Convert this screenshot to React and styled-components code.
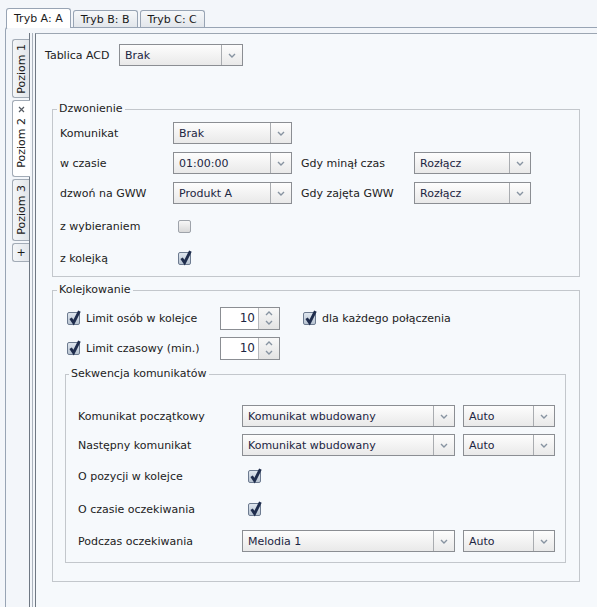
import React from 'react'
import styled, { createGlobalStyle } from 'styled-components'

const GlobalStyle = createGlobalStyle`
  html, body {
    margin: 0;
    padding: 0;
    background: #f3f6fa;
  }
  body {
    font-family: "DejaVu Sans", Verdana, sans-serif;
    font-size: 11px;
    color: #222222;
  }
`

const Window = styled.div`
  width: 597px;
  height: 607px;
  overflow: hidden;
  display: flex;
  flex-direction: column;
`

const TabBar = styled.div`
  display: flex;
  align-items: flex-end;
  gap: 2px;
  height: 27px;
  box-sizing: border-box;
  padding: 8px 0 0 6px;
`

const TopTab = styled.div`
  position: relative;
  z-index: ${p => (p.$active ? 2 : 0)};
  box-sizing: border-box;
  height: ${p => (p.$active ? 20 : 17)}px;
  margin-bottom: ${p => (p.$active ? -1 : 0)}px;
  padding: 0 7px 0 7px;
  display: flex;
  align-items: center;
  border: 1px solid #98a4b4;
  border-bottom: none;
  border-radius: 3px 3px 0 0;
  background: ${p => (p.$active ? '#ffffff' : 'linear-gradient(#f6f8fa, #e2e6eb)')};
  color: #1a1a1a;
  white-space: nowrap;
`

const OuterPanel = styled.div`
  flex: 1;
  display: flex;
  margin-left: 5px;
  border-top: 1px solid #98a4b4;
  border-left: 1px solid #98a4b4;
  border-top-left-radius: 3px;
  min-height: 0;
`

const SideStrip = styled.div`
  width: 23px;
  flex: none;
  box-sizing: border-box;
  padding: 11px 0 0 6px;
  display: flex;
  flex-direction: column;
  gap: 2px;
`

const SideTab = styled.div`
  position: relative;
  z-index: ${p => (p.$active ? 2 : 0)};
  box-sizing: border-box;
  width: ${p => (p.$active ? 18 : 17)}px;
  height: ${p => p.$h}px;
  border: 1px solid #a2abb6;
  border-right: none;
  border-radius: 3px 0 0 3px;
  background: ${p => (p.$active ? '#ffffff' : 'linear-gradient(to right, #f4f6f8, #e1e5ea)')};
  display: flex;
  flex-direction: column;
  align-items: center;
  justify-content: ${p => (p.$active ? 'flex-start' : 'center')};
  padding-top: ${p => (p.$active ? 5 : 0)}px;
  color: #1a1a1a;
`

const SideText = styled.span`
  writing-mode: vertical-rl;
  transform: rotate(180deg);
  white-space: nowrap;
  line-height: 15px;
  margin-top: ${p => p.$mt || 0}px;
`

const Pane = styled.div`
  flex: 1;
  display: flex;
  margin-top: 5px;
  border-left: 1px solid #6f7883;
  padding-left: 2px;
`

const PaneInner = styled.div`
  flex: 1;
  display: flex;
  border-left: 1px solid #aab2bc;
  padding-left: 2px;
`

const Content = styled.div`
  flex: 1;
  border-left: 1px solid #6f7883;
  border-top: 1px solid #9ca6b2;
  background: #f6f9fc;
  padding: 10px 0 0 9px;
`

const Row = styled.div`
  display: flex;
  align-items: center;
  height: ${p => p.$h || 30}px;
  padding-left: ${p => p.$pl || 0}px;
`

const Label = styled.span`
  flex: none;
  box-sizing: border-box;
  width: ${p => p.$w}px;
  padding-left: ${p => p.$pl || 0}px;
  white-space: nowrap;
`

const Group = styled.fieldset`
  box-sizing: border-box;
  width: ${p => p.$w}px;
  min-width: 0;
  margin: ${p => p.$mt}px 0 0 ${p => p.$ml}px;
  padding: ${p => p.$pad};
  border: 1px solid #c3c7cc;
`

const Legend = styled.legend`
  padding: 0 2px;
  margin-left: ${p => p.$ml}px;
  line-height: 14px;
  color: #222222;
`

const SelectBox = styled.div`
  flex: none;
  box-sizing: border-box;
  width: ${p => p.$w}px;
  height: 22px;
  margin-left: ${p => p.$ml || 0}px;
  display: flex;
  border: 1px solid #8b8e93;
  background: linear-gradient(#fdfdfd, #e9e9e9);
  color: #1c2542;
`

const SelectValue = styled.span`
  flex: 1;
  padding-left: 5px;
  display: flex;
  align-items: center;
  white-space: nowrap;
  overflow: hidden;
`

const SelectArrow = styled.span`
  width: 20px;
  flex: none;
  border-left: 1px solid #a9acb0;
  display: flex;
  align-items: center;
  justify-content: center;
`

const SpinBox = styled.div`
  flex: none;
  box-sizing: border-box;
  width: 60px;
  height: 23px;
  display: flex;
  border: 1px solid #8b8e93;
  background: #ffffff;
`

const SpinValue = styled.span`
  flex: 1;
  display: flex;
  align-items: center;
  justify-content: flex-end;
  padding-right: 3px;
  color: #1c2542;
  font-size: 12px;
`

const SpinButtons = styled.span`
  width: 20px;
  flex: none;
  border-left: 1px solid #b6b9bd;
  background: linear-gradient(#f8f8f8, #e3e3e3);
  display: flex;
  flex-direction: column;
  align-items: center;
  justify-content: center;
  gap: 4px;
`

const Box = styled.span`
  position: relative;
  flex: none;
  box-sizing: border-box;
  width: 13px;
  height: 13px;
  margin-left: ${p => p.$ml || 0}px;
  border: 1px solid ${p => (p.$on ? '#6d7b90' : '#9ea3aa')};
  border-radius: 2px;
  background: ${p => (p.$on ? 'linear-gradient(#dfe6ee, #b8c4d2)' : 'linear-gradient(#f7f7f7, #d9d9d9)')};
`

const Tick = styled.svg`
  position: absolute;
  left: -1px;
  top: -5px;
  overflow: visible;
`

const CheckText = styled.span`
  margin-left: 6px;
  white-space: nowrap;
`

const CheckCell = styled.span`
  flex: none;
  width: ${p => p.$w}px;
  display: flex;
  align-items: center;
`

const Chevron = ({ up }) => (
  <svg width="8" height="5" viewBox="0 0 8 5">
    <polyline
      points={up ? '1,4 4,1 7,4' : '1,1 4,4 7,1'}
      fill="none"
      stroke="#8793a1"
      strokeWidth="1.4"
    />
  </svg>
)

const Select = ({ w, ml, children }) => (
  <SelectBox $w={w} $ml={ml}>
    <SelectValue>{children}</SelectValue>
    <SelectArrow>
      <Chevron />
    </SelectArrow>
  </SelectBox>
)

const Spinner = ({ value }) => (
  <SpinBox>
    <SpinValue>{value}</SpinValue>
    <SpinButtons>
      <Chevron up />
      <Chevron />
    </SpinButtons>
  </SpinBox>
)

// bold windows-style tick, its top end pokes out above the box
const Check = ({ on, ml }) => (
  <Box $on={on} $ml={ml}>
    {on && (
      <Tick width="15" height="18" viewBox="0 0 15 18">
        <path d="M3.6 10.2 L6.6 14.6 L12.4 3.2" fill="none" stroke="#1f2d4d" strokeWidth="2.9" strokeLinejoin="miter" />
      </Tick>
    )}
  </Box>
)

const CloseMark = () => (
  <svg width="7" height="7" viewBox="0 0 7 7">
    <path d="M1 1 L6 6 M6 1 L1 6" stroke="#555b63" strokeWidth="1.2" />
  </svg>
)

export default function App() {
  return (
    <>
      <GlobalStyle />
      <Window>
        <TabBar>
          <TopTab $active>Tryb A: A</TopTab>
          <TopTab>Tryb B: B</TopTab>
          <TopTab>Tryb C: C</TopTab>
        </TabBar>
        <OuterPanel>
          <SideStrip>
            <SideTab $h={59}>
              <SideText>Poziom 1</SideText>
            </SideTab>
            <SideTab $h={77} $active>
              <CloseMark />
              <SideText $mt={5}>Poziom 2</SideText>
            </SideTab>
            <SideTab $h={62}>
              <SideText>Poziom 3</SideText>
            </SideTab>
            <SideTab $h={19}>+</SideTab>
          </SideStrip>
          <Pane>
            <PaneInner>
              <Content>
                <Row $h={22}>
                  <Label $w={74}>Tablica ACD</Label>
                  <Select w={124}>Brak</Select>
                </Row>

                <Group $w={528} $mt={36} $ml={7} $pad="2px 7px 4px 7px">
                  <Legend $ml={-3}>Dzwonienie</Legend>
                  <Row>
                    <Label $w={113}>Komunikat</Label>
                    <Select w={119}>Brak</Select>
                  </Row>
                  <Row>
                    <Label $w={113}>w czasie</Label>
                    <Select w={119}>01:00:00</Select>
                    <Label $w={122} $pl={9}>Gdy minął czas</Label>
                    <Select w={117}>Rozłącz</Select>
                  </Row>
                  <Row>
                    <Label $w={113}>dzwoń na GWW</Label>
                    <Select w={119}>Produkt A</Select>
                    <Label $w={122} $pl={9}>Gdy zajęta GWW</Label>
                    <Select w={117}>Rozłącz</Select>
                  </Row>
                  <Row $h={36}>
                    <Label $w={113}>z wybieraniem</Label>
                    <Check ml={5} />
                  </Row>
                  <Row $h={28}>
                    <Label $w={113}>z kolejką</Label>
                    <Check on ml={5} />
                  </Row>
                </Group>

                <Group $w={528} $mt={6} $ml={7} $pad="6px 0 18px 12px">
                  <Legend $ml={-8}>Kolejkowanie</Legend>
                  <Row $pl={2}>
                    <CheckCell $w={153}>
                      <Check on />
                      <CheckText>Limit osób w kolejce</CheckText>
                    </CheckCell>
                    <Spinner value="10" />
                    <Check on ml={23} />
                    <CheckText>dla każdego połączenia</CheckText>
                  </Row>
                  <Row $pl={2}>
                    <CheckCell $w={153}>
                      <Check on />
                      <CheckText>Limit czasowy (min.)</CheckText>
                    </CheckCell>
                    <Spinner value="10" />
                  </Row>

                  <Group $w={501} $mt={4} $ml={0} $pad="20px 0 5px 12px">
                    <Legend $ml={-9}>Sekwencja komunikatów</Legend>
                    <Row>
                      <Label $w={164}>Komunikat początkowy</Label>
                      <Select w={213}>Komunikat wbudowany</Select>
                      <Select w={92} ml={8}>Auto</Select>
                    </Row>
                    <Row $h={28}>
                      <Label $w={164}>Następny komunikat</Label>
                      <Select w={213}>Komunikat wbudowany</Select>
                      <Select w={92} ml={8}>Auto</Select>
                    </Row>
                    <Row $h={34}>
                      <Label $w={164}>O pozycji w kolejce</Label>
                      <Check on ml={6} />
                    </Row>
                    <Row $h={32}>
                      <Label $w={164}>O czasie oczekiwania</Label>
                      <Check on ml={6} />
                    </Row>
                    <Row $h={32}>
                      <Label $w={164}>Podczas oczekiwania</Label>
                      <Select w={213}>Melodia 1</Select>
                      <Select w={92} ml={8}>Auto</Select>
                    </Row>
                  </Group>
                </Group>
              </Content>
            </PaneInner>
          </Pane>
        </OuterPanel>
      </Window>
    </>
  )
}
